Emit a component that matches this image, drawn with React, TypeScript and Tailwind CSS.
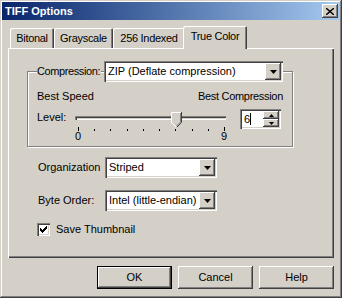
import React from 'react'

// classic 3D borders
const raised =
  'shadow-[inset_-1px_-1px_0_#404040,inset_1px_1px_0_#fff,inset_-2px_-2px_0_#808080,inset_2px_2px_0_#d4d0c8]'
const sunken =
  'shadow-[inset_1px_1px_0_#808080,inset_2px_2px_0_#404040,inset_-1px_-1px_0_#fff,inset_-2px_-2px_0_#d4d0c8]'

function DownArrow() {
  return (
    <svg width="7" height="4" viewBox="0 0 7 4">
      <path d="M0 0h7L3.5 4z" fill="#000" />
    </svg>
  )
}

function Dropdown({ value, className }: { value: string; className: string }) {
  return (
    <div className={`flex h-[21px] items-center bg-white p-[2px] ${sunken} ${className}`}>
      <span className="flex-1 truncate pl-[2px] text-[11px] leading-[13px] text-black">{value}</span>
      <div className={`flex h-[17px] w-[16px] items-center justify-center bg-[#d4d0c8] ${raised}`}>
        <DownArrow />
      </div>
    </div>
  )
}

function Tab({ label, width, active }: { label: string; width: string; active?: boolean }) {
  if (active) {
    return (
      <div
        className={`relative z-10 -mx-[2px] -mb-[1px] flex h-[23px] items-start justify-center whitespace-nowrap rounded-t-[2px] bg-[#d4d0c8] pt-[4px] tracking-[-0.3px] shadow-[inset_1px_1px_0_#fff,inset_-1px_0_0_#404040,inset_-2px_0_0_#808080] ${width}`}
      >
        {label}
      </div>
    )
  }
  return (
    <div
      className={`flex h-[20px] items-start justify-center whitespace-nowrap rounded-t-[2px] bg-[#d4d0c8] pt-[4px] tracking-[-0.3px] shadow-[inset_1px_1px_0_#fff,inset_-1px_0_0_#404040,inset_-2px_0_0_#808080] ${width}`}
    >
      {label}
    </div>
  )
}

function Button({ label, isDefault }: { label: string; isDefault?: boolean }) {
  return (
    <div
      className={`flex h-[23px] w-[75px] items-center justify-center bg-[#d4d0c8] ${
        isDefault ? 'border border-black' : ''
      } ${raised}`}
    >
      {label}
    </div>
  )
}

export default function App() {
  const ticks = Array.from({ length: 10 }, (_, i) => i)

  return (
    <div
      className={`flex h-[298px] w-[342px] flex-col bg-[#d4d0c8] p-[2px] font-['Liberation_Sans',Arial,sans-serif] text-[11px] leading-[13px] text-black shadow-[inset_-1px_-1px_0_#404040,inset_1px_1px_0_#d4d0c8,inset_-2px_-2px_0_#808080,inset_2px_2px_0_#fff]`}
    >
      {/* title bar */}
      <div className="flex h-[18px] items-center justify-between bg-linear-to-r from-[#0a246a] to-[#a6caf0] pl-[3px] pr-[2px]">
        <span className="text-[11px] font-bold text-white">TIFF Options</span>
        <div className={`flex h-[14px] w-[16px] items-center justify-center bg-[#d4d0c8] ${raised}`}>
          <svg width="8" height="7" viewBox="0 0 8 7">
            <path d="M1 0l3 2.5L7 0h1v1L5 3.5 8 6v1H7L4 4.5 1 7H0V6l3-2.5L0 1V0z" fill="#000" />
          </svg>
        </div>
      </div>

      {/* tabs */}
      <div className="mt-[6px] flex h-[22px] items-end pl-[8px]">
        <Tab label="Bitonal" width="w-[44px]" />
        <Tab label="Grayscale" width="w-[59px]" />
        <Tab label="256 Indexed" width="w-[72px]" />
        <Tab label="True Color" width="w-[64px]" active />
      </div>

      {/* tab panel */}
      <div className="mx-[6px] h-[210px] pl-[19px] pt-[13px] shadow-[inset_1px_1px_0_#fff,inset_-1px_-1px_0_#404040,inset_-2px_-2px_0_#808080]">
        <fieldset className="w-[266px] min-w-0 border border-[#808080] px-[9px] pb-[4px] pt-[8px] shadow-[inset_1px_1px_0_#fff,1px_1px_0_#fff]">
          <legend className="flex h-[21px] items-start bg-[#d4d0c8]">
            <span className="mt-[4px] w-[64px] whitespace-nowrap tracking-[-0.4px]">Compression:</span>
            <div className="mt-[10px] h-[2px] w-[3px] border-t border-b border-t-[#808080] border-b-white" />
            <Dropdown value="ZIP (Deflate compression)" className="w-[179px]" />
          </legend>

          <div className="flex h-[13px] items-center justify-between">
            <span>Best Speed</span>
            <span className="tracking-[-0.3px]">Best Compression</span>
          </div>

          <div className="mt-[6px] flex items-start">
            <span className="mt-[2px] w-[38px]">Level:</span>

            {/* slider */}
            <div className="flex w-[151px] flex-col">
              <div className="relative h-[18px]">
                <div className="mt-[7px] h-[4px] shadow-[inset_1px_1px_0_#808080,inset_2px_2px_0_#404040,inset_-1px_-1px_0_#fff,inset_-2px_-2px_0_#d4d0c8]" />
                <svg className="absolute left-[96px] top-[3px]" width="11" height="16" viewBox="0 0 11 16">
                  <path d="M0.5 0.5h10v10l-5 5-5-5z" fill="#d4d0c8" />
                  <path d="M0.5 11V0.5h10" stroke="#fff" fill="none" />
                  <path d="M10.5 0v10.5l-5 5" stroke="#404040" fill="none" />
                  <path d="M9.5 1v9l-4 4" stroke="#808080" fill="none" />
                  <path d="M0.5 10.5l5 5" stroke="#fff" fill="none" />
                </svg>
              </div>
              <div className="flex h-[4px] items-end justify-between pl-[3px] pr-[1px]">
                {ticks.map((t) => (
                  <div
                    key={t}
                    className={t === 0 || t === 9 ? 'h-[4px] w-[1px] bg-black' : 'h-[2px] w-[1px] bg-black'}
                  />
                ))}
              </div>
              <div className="-mr-[2px] ml-[-1px] flex justify-between leading-[11px]">
                <span className="w-[8px] text-center">0</span>
                <span className="w-[8px] text-center">9</span>
              </div>
            </div>

            {/* spin box */}
            <div className={`ml-[14px] flex h-[20px] w-[41px] items-center bg-white p-[2px] ${sunken}`}>
              <span className="flex flex-1 items-center pl-[2px]">
                6<span className="inline-block h-[12px] w-[1px] bg-black" />
              </span>
              <div className="flex h-[16px] w-[16px] flex-col">
                <div className={`flex h-[8px] items-center justify-center bg-[#d4d0c8] ${raised}`}>
                  <svg width="5" height="3" viewBox="0 0 5 3">
                    <path d="M0 3h5L2.5 0z" fill="#000" />
                  </svg>
                </div>
                <div className={`flex h-[8px] items-center justify-center bg-[#d4d0c8] ${raised}`}>
                  <svg width="5" height="3" viewBox="0 0 5 3">
                    <path d="M0 0h5L2.5 3z" fill="#000" />
                  </svg>
                </div>
              </div>
            </div>
          </div>
        </fieldset>

        <div className="ml-[11px] mt-[10px] flex items-center">
          <span className="w-[67px]">Organization</span>
          <Dropdown value="Striped" className="w-[112px]" />
        </div>
        <div className="ml-[11px] mt-[12px] flex items-center">
          <span className="w-[67px]">Byte Order:</span>
          <Dropdown value="Intel (little-endian)" className="w-[112px]" />
        </div>

        <div className="ml-[10px] mt-[12px] flex items-center">
          <div className={`flex h-[13px] w-[13px] items-center justify-center bg-white ${sunken}`}>
            <svg width="7" height="7" viewBox="0 0 7 7">
              <path d="M0 2h1v1h1v1h1V3h1V2h1V1h1V0h1v3H6v1H5v1H4v1H3v1H2V6H1V5H0z" fill="#000" />
            </svg>
          </div>
          <span className="ml-[6px]">Save Thumbnail</span>
        </div>
      </div>

      {/* buttons */}
      <div className="mt-[8px] flex justify-end gap-[6px] pr-[6px]">
        <Button label="OK" isDefault />
        <Button label="Cancel" />
        <Button label="Help" />
      </div>
    </div>
  )
}
